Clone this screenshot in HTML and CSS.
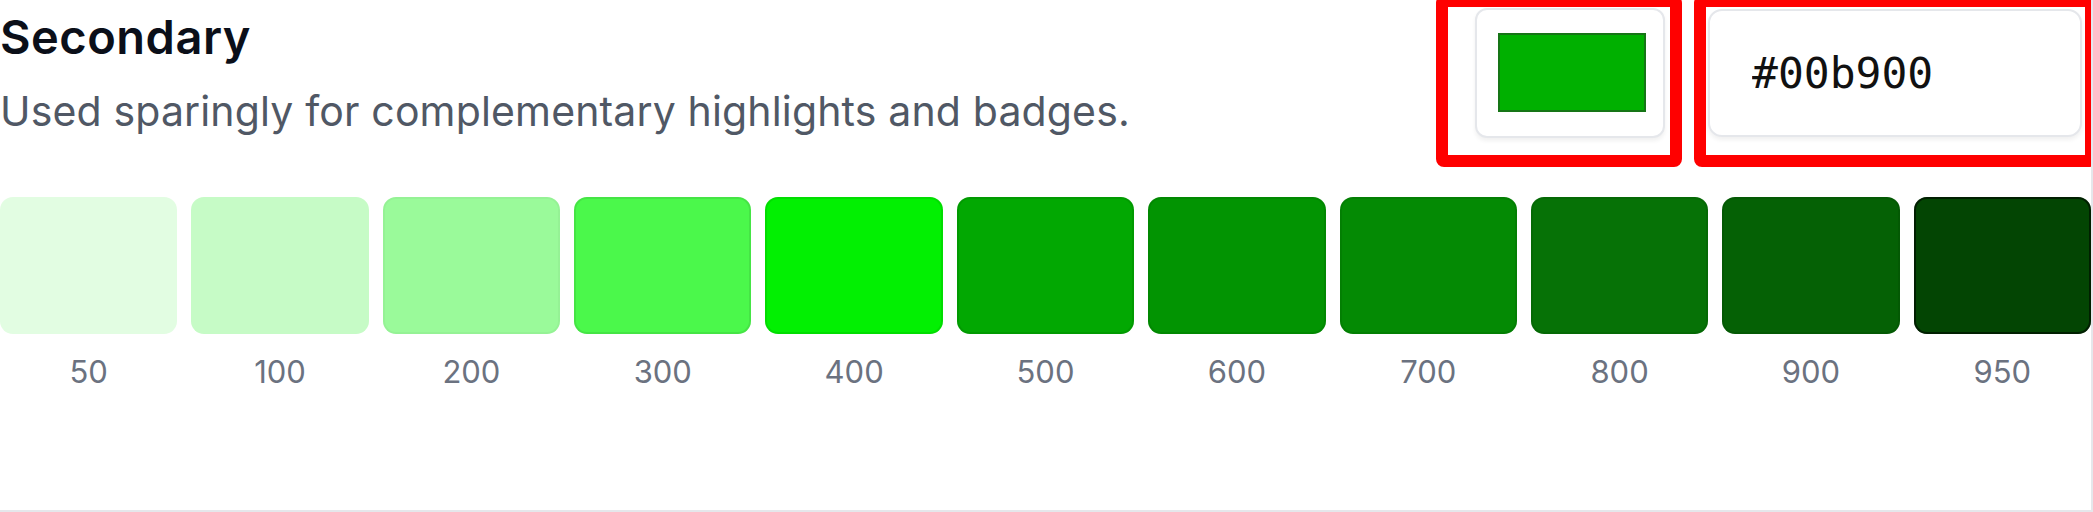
FILE: index.html
```html
<!DOCTYPE html>
<html lang="en">
<head>
    <meta charset="UTF-8">
    <meta name="viewport" content="width=device-width, initial-scale=1.0">
    <title>Palette - Secondary</title>
    <link rel="stylesheet" href="styles.css">
</head>
<body>
    <div class="card">
        <div class="header">
            <div class="info">
                <h2>Secondary</h2>
                <p>Used sparingly for complementary highlights and badges.</p>
            </div>
            <div class="controls">
                <button class="picker" type="button"><span class="picker-swatch"></span></button>
                <input class="hex-input" type="text" value="#00b900" spellcheck="false">
            </div>
        </div>

        <div class="scale">
            <div class="step"><div class="swatch s50"></div><span>50</span></div>
            <div class="step"><div class="swatch s100"></div><span>100</span></div>
            <div class="step"><div class="swatch s200"></div><span>200</span></div>
            <div class="step"><div class="swatch s300"></div><span>300</span></div>
            <div class="step"><div class="swatch s400"></div><span>400</span></div>
            <div class="step"><div class="swatch s500"></div><span>500</span></div>
            <div class="step"><div class="swatch s600"></div><span>600</span></div>
            <div class="step"><div class="swatch s700"></div><span>700</span></div>
            <div class="step"><div class="swatch s800"></div><span>800</span></div>
            <div class="step"><div class="swatch s900"></div><span>900</span></div>
            <div class="step"><div class="swatch s950"></div><span>950</span></div>
        </div>

        <!-- review highlights -->
        <div class="highlight highlight-picker"></div>
        <div class="highlight highlight-input"></div>
    </div>
</body>
</html>
```

FILE: styles.css
```css
:root {
    --text-dark: #0b0f19;
    --text-muted: #505865;
    --label: #6b7280;
    --line: #e5e7eb;
    --mark: #ff0000;
}

body {
    margin: 0;
    background: #ffffff;
    font-family: 'Inter', 'Noto Sans', sans-serif;
    color: var(--text-dark);
}

.card {
    position: relative;
    width: 2093px;
    height: 512px;
    box-sizing: border-box;
    border-right: 2px solid var(--line);
    border-bottom: 2px solid var(--line);
    overflow: hidden;
}

.header {
    display: flex;
    justify-content: space-between;
    align-items: flex-start;
    height: 138px;
}

.info {
    padding-top: 8px;
}

.info h2 {
    margin: 0;
    font-size: 47px;
    font-weight: 600;
    line-height: 57px;
    letter-spacing: 0.5px;
}

.info p {
    margin: 21px 0 0;
    font-size: 41px;
    line-height: 50px;
    letter-spacing: 0.15px;
    color: var(--text-muted);
}

.controls {
    display: flex;
    align-items: center;
    gap: 43px;
    padding-top: 8px;
    margin-right: 9px;
}

.picker {
    width: 190px;
    height: 130px;
    display: flex;
    align-items: center;
    justify-content: center;
    padding: 0 0 2px 4px;
    background: #ffffff;
    border: 2px solid var(--line);
    border-radius: 12px;
    box-shadow: 0 3px 4px rgba(0, 0, 0, 0.06);
    cursor: pointer;
}

.picker-swatch {
    display: block;
    width: 148px;
    height: 79px;
    box-sizing: border-box;
    background: #00b000;
    border: 2px solid rgba(40, 70, 40, 0.55);
}

.hex-input {
    width: 374px;
    height: 128px;
    box-sizing: border-box;
    padding: 0 0 0 42px;
    border: 2px solid var(--line);
    border-radius: 14px;
    box-shadow: 0 3px 4px rgba(0, 0, 0, 0.06);
    font-family: 'DejaVu Sans Mono', monospace;
    font-size: 43px;
    color: #111111;
    outline: none;
}

.scale {
    display: grid;
    grid-template-columns: repeat(11, 1fr);
    gap: 14px;
    margin: 59px 0 0 0;
}

.step {
    display: flex;
    flex-direction: column;
    align-items: center;
}

.swatch {
    width: 100%;
    height: 137px;
    border-radius: 13px;
    box-shadow: inset 0 0 0 2px rgba(0, 0, 0, 0.08);
}

.step span {
    margin-top: 19px;
    font-size: 31px;
    line-height: 38px;
    color: var(--label);
}

.s50 { background: #e2fde2; box-shadow: none; }
.s100 { background: #c6fbc6; box-shadow: none; }
.s200 { background: #9afa9a; box-shadow: inset 0 0 0 2px rgba(0, 0, 0, 0.03); }
.s300 { background: #4bf84b; }
.s400 { background: #02f002; }
.s500 { background: #02a802; }
.s600 { background: #029402; }
.s700 { background: #048a04; }
.s800 { background: #067206; }
.s900 { background: #056105; }
.s950 { background: #034503; box-shadow: inset 0 0 0 2px rgba(0, 0, 0, 0.55); }

.highlight {
    position: absolute;
    top: -5px;
    height: 172px;
    box-sizing: border-box;
    border: 12px solid var(--mark);
    border-radius: 8px;
    pointer-events: none;
}

.highlight-picker {
    left: 1436px;
    width: 246px;
}

.highlight-input {
    left: 1694px;
    width: 403px;
}
```
